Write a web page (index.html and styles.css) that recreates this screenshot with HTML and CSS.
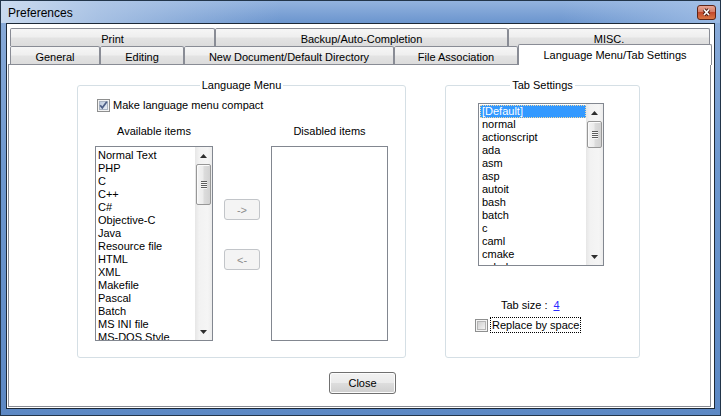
FILE: index.html
```html
<!DOCTYPE html>
<html>
<head>
<meta charset="utf-8">
<title>Preferences</title>
<link rel="stylesheet" href="styles.css">
</head>
<body>
<div class="window">
  <div class="titlebar">
    <span class="title">Preferences</span>
    <span class="close-x">
      <svg width="19" height="15" viewBox="0 0 19 15">
        <defs>
          <linearGradient id="xg" x1="0" y1="0" x2="0" y2="1">
            <stop offset="0" stop-color="#e9a999"/>
            <stop offset="0.45" stop-color="#d57d66"/>
            <stop offset="0.5" stop-color="#c2492d"/>
            <stop offset="1" stop-color="#dc7a45"/>
          </linearGradient>
        </defs>
        <rect x="0.5" y="0.5" width="18" height="14" rx="2.5" fill="url(#xg)" stroke="#5e2518"/>
        <path d="M7 4.5 L12 10 M12 4.5 L7 10" stroke="#4a1c12" stroke-width="3.4"/>
        <path d="M7 4.5 L12 10 M12 4.5 L7 10" stroke="#ffffff" stroke-width="1.7"/>
      </svg>
    </span>
  </div>
  <div class="client">
    <div class="tabctl">
      <div class="tabrow">
        <div class="tab w-print">Print</div>
        <div class="tab w-backup">Backup/Auto-Completion</div>
        <div class="tab w-misc">MISC.</div>
      </div>
      <div class="tabrow">
        <div class="tab w-general">General</div>
        <div class="tab w-editing">Editing</div>
        <div class="tab w-newdoc">New Document/Default Directory</div>
        <div class="tab w-fileassoc">File Association</div>
        <div class="tab selected w-lang">Language Menu/Tab Settings</div>
      </div>
      <div class="panel">
        <div class="groups">
          <fieldset class="group lang-group">
            <legend>Language Menu</legend>
            <label class="check-row compact">
              <span class="checkbox">
                <svg width="13" height="13" viewBox="0 0 13 13">
                  <defs>
                    <linearGradient id="cbg" x1="0" y1="0" x2="1" y2="1">
                      <stop offset="0" stop-color="#b9c7db"/>
                      <stop offset="1" stop-color="#eef2f8"/>
                    </linearGradient>
                  </defs>
                  <rect x="0.5" y="0.5" width="12" height="12" fill="#f3f3f3" stroke="#8e8f8f"/>
                  <rect x="2.5" y="2.5" width="8" height="8" fill="url(#cbg)" stroke="#aab4c3"/>
                  <path d="M3.2 6.2 L5.3 8.8 L9.8 2.8" fill="none" stroke="#4d5f86" stroke-width="1.7"/>
                </svg>
              </span>
              <span>Make language menu compact</span>
            </label>
            <div class="lang-cols">
              <div class="col">
                <div class="col-label">Available items</div>
                <div class="listbox avail">
                  <ul class="items">
                    <li>Normal Text</li>
                    <li>PHP</li>
                    <li>C</li>
                    <li>C++</li>
                    <li>C#</li>
                    <li>Objective-C</li>
                    <li>Java</li>
                    <li>Resource file</li>
                    <li>HTML</li>
                    <li>XML</li>
                    <li>Makefile</li>
                    <li>Pascal</li>
                    <li>Batch</li>
                    <li>MS INI file</li>
                    <li>MS-DOS Style</li>
                    <li>ASP</li>
                  </ul>
                  <div class="vscroll">
                    <div class="sb-arrow"><svg width="7" height="4" viewBox="0 0 7 4"><polygon points="0,4 7,4 3.5,0" fill="#2e2e2e"/></svg></div>
                    <div class="sb-track"><div class="sb-thumb thumb-avail"><span class="grip"></span></div></div>
                    <div class="sb-arrow"><svg width="7" height="4" viewBox="0 0 7 4"><polygon points="0,0 7,0 3.5,4" fill="#2e2e2e"/></svg></div>
                  </div>
                </div>
              </div>
              <div class="move-btns">
                <button class="btn-small" disabled>-&gt;</button>
                <button class="btn-small" disabled>&lt;-</button>
              </div>
              <div class="col">
                <div class="col-label">Disabled items</div>
                <div class="listbox disabled-list"></div>
              </div>
            </div>
          </fieldset>
          <fieldset class="group tab-group">
            <legend>Tab Settings</legend>
            <div class="listbox tablist">
              <ul class="items">
                <li class="sel">[Default]</li>
                <li>normal</li>
                <li>actionscript</li>
                <li>ada</li>
                <li>asm</li>
                <li>asp</li>
                <li>autoit</li>
                <li>bash</li>
                <li>batch</li>
                <li>c</li>
                <li>caml</li>
                <li>cmake</li>
                <li>cobol</li>
              </ul>
              <div class="vscroll">
                <div class="sb-arrow"><svg width="7" height="4" viewBox="0 0 7 4"><polygon points="0,4 7,4 3.5,0" fill="#2e2e2e"/></svg></div>
                <div class="sb-track"><div class="sb-thumb thumb-tab"><span class="grip"></span></div></div>
                <div class="sb-arrow"><svg width="7" height="4" viewBox="0 0 7 4"><polygon points="0,0 7,0 3.5,4" fill="#2e2e2e"/></svg></div>
              </div>
            </div>
            <div class="tabsize">Tab size :<a class="link">4</a></div>
            <label class="check-row replace">
              <span class="checkbox">
                <svg width="13" height="13" viewBox="0 0 13 13">
                  <defs>
                    <linearGradient id="cbu" x1="0" y1="0" x2="1" y2="1">
                      <stop offset="0" stop-color="#cdcdcd"/>
                      <stop offset="1" stop-color="#f6f6f6"/>
                    </linearGradient>
                  </defs>
                  <rect x="0.5" y="0.5" width="12" height="12" fill="#f4f4f4" stroke="#8e8f8f"/>
                  <rect x="2.5" y="2.5" width="8" height="8" fill="url(#cbu)" stroke="#b5b5b5"/>
                </svg>
              </span>
              <span class="focus">Replace by space</span>
            </label>
          </fieldset>
        </div>
        <div class="footer">
          <button class="btn-close">Close</button>
        </div>
      </div>
    </div>
  </div>
</div>
</body>
</html>
```
FILE: styles.css
```css
* {
  box-sizing: border-box;
}

html, body {
  margin: 0;
  padding: 0;
}

body {
  width: 721px;
  height: 416px;
  overflow: hidden;
  background: #1f2f40;
  font-family: "Liberation Sans", Arial, sans-serif;
  font-size: 11px;
  color: #000;
}

.window {
  width: 721px;
  height: 416px;
  border: 1px solid #22354a;
  background: linear-gradient(to bottom, #8cadda 0%, #6e98cf 40%, #5c88c4 100%);
  display: flex;
  flex-direction: column;
}

/* ---------- Title bar ---------- */
.titlebar {
  height: 22px;
  flex: none;
  display: flex;
  align-items: flex-start;
  justify-content: space-between;
  padding: 0 4px 0 7px;
  background:
    linear-gradient(to right, rgba(206,221,240,0.95) 0px, rgba(184,205,233,0.75) 100px, rgba(120,160,215,0) 280px, rgba(120,160,215,0) 560px, rgba(168,196,233,0.75) 719px),
    linear-gradient(to bottom, #93b3df 0%, #6b95ce 100%);
}

.title {
  font-size: 12px;
  line-height: 22px;
  padding-top: 1px;
  color: #000;
}

.close-x {
  display: block;
  margin-top: 4px;
  width: 19px;
  height: 15px;
}

.close-x svg {
  display: block;
}

/* ---------- Client ---------- */
.client {
  flex: 1;
  margin: 0 5px 6px;
  border: 1px solid #1c2836;
  background: #fff;
  display: flex;
  flex-direction: column;
}

.tabctl {
  flex: 1;
  margin: 4px 3px 1px 1px;
  display: flex;
  flex-direction: column;
}

.tabrow {
  height: 18px;
  flex: none;
  display: flex;
  padding-left: 2px;
}

.tab {
  height: 18px;
  border: 1px solid #898c95;
  border-bottom: none;
  border-radius: 2px 2px 0 0;
  background: linear-gradient(to bottom, #f6f6f6 0%, #efefef 45%, #e3e3e3 55%, #dcdcdc 100%);
  text-align: center;
  line-height: 16px;
  padding-top: 2px;
  white-space: nowrap;
  flex: none;
}

.w-print { width: 205px; }
.w-backup { width: 293px; }
.w-misc { width: 202px; }
.w-general { width: 90px; }
.w-editing { width: 84px; }
.w-newdoc { width: 210px; }
.w-fileassoc { width: 124px; }
.w-lang { width: 194px; }

.tab.selected {
  position: relative;
  z-index: 1;
  margin-top: -2px;
  height: 21px;
  background: #fff;
  line-height: 16px;
  padding-top: 2px;
}

.panel {
  flex: 1;
  border: 1px solid #898c95;
  background: #fff;
  display: flex;
  flex-direction: column;
}

/* ---------- Groups ---------- */
.groups {
  display: flex;
  margin-top: 14px;
  padding-left: 68px;
  gap: 39px;
}

.group {
  margin: 0;
  padding: 0;
  min-width: 0;
  height: 279px;
  border: 1px solid #d5dfe5;
  border-radius: 3px;
}

.group legend {
  margin: 0 auto;
  padding: 0 2px;
  line-height: 13px;
  font-size: 11px;
}

.lang-group { width: 329px; }
.tab-group { width: 195px; }

.check-row {
  display: flex;
  align-items: center;
  line-height: 13px;
}

.checkbox {
  width: 13px;
  height: 13px;
  flex: none;
}

.checkbox svg {
  display: block;
}

.compact {
  margin-top: 7px;
  padding-left: 19px;
  gap: 3px;
}

.lang-cols {
  display: flex;
  margin-top: 13px;
  padding-left: 17px;
  gap: 11px;
}

.col-label {
  height: 13px;
  line-height: 13px;
  text-align: center;
  margin-bottom: 8px;
  white-space: nowrap;
}

.listbox {
  border: 1px solid #828790;
  background: #fff;
  display: flex;
  overflow: hidden;
}

.avail { width: 118px; height: 195px; }
.disabled-list { width: 117px; height: 195px; }

.items {
  list-style: none;
  margin: 0;
  padding: 1px 0 0 1px;
  flex: 1;
  min-width: 0;
  overflow: hidden;
}

.items li {
  height: 13px;
  line-height: 13px;
  padding-left: 2px;
  white-space: nowrap;
}

.avail .items {
  padding-top: 2px;
  padding-left: 0;
}

.items li.sel {
  background: #3399ff;
  color: #fff;
  outline: 1px dotted #f3d9a6;
  outline-offset: -1px;
}

/* ---------- Scrollbar ---------- */
.vscroll {
  width: 17px;
  flex: none;
  display: flex;
  flex-direction: column;
  background: linear-gradient(to right, #e6e6e6 0%, #f2f2f2 25%, #f5f5f5 75%, #ececec 100%);
}

.sb-arrow {
  height: 17px;
  flex: none;
  display: flex;
  align-items: center;
  justify-content: center;
}

.sb-arrow svg {
  display: block;
}

.sb-track {
  flex: 1;
  display: flex;
  flex-direction: column;
  padding: 0 1px;
}

.sb-thumb {
  border: 1px solid #979797;
  border-radius: 2px;
  background: linear-gradient(to right, #f4f4f4 0%, #ececec 45%, #dcdcdc 55%, #d2d2d2 100%);
  box-shadow: inset 1px 1px 0 #fbfbfb;
  display: flex;
  align-items: center;
  justify-content: center;
}

.thumb-avail { height: 41px; }
.thumb-tab { height: 27px; }

.grip {
  width: 6px;
  height: 8px;
  background: repeating-linear-gradient(to bottom, #5c5c5c 0 1px, #f7f7f7 1px 2px);
}

/* ---------- Buttons ---------- */
.move-btns {
  width: 36px;
  padding-top: 74px;
  display: flex;
  flex-direction: column;
  gap: 29px;
}

.btn-small {
  width: 36px;
  height: 21px;
  margin: 0;
  padding: 0;
  border: 1px solid #c2c5c9;
  border-radius: 3px;
  background: #f4f4f4;
  color: #8d8d8d;
  font-family: "Liberation Sans", Arial, sans-serif;
  font-size: 11px;
}

/* ---------- Tab settings ---------- */
.tablist {
  width: 126px;
  height: 163px;
  margin: 11px 0 0 32px;
}

.tabsize {
  margin-top: 33px;
  padding-left: 55px;
  line-height: 13px;
  white-space: nowrap;
}

.link {
  color: #2b2bff;
  text-decoration: underline;
  margin-left: 6px;
}

.replace {
  margin-top: 5px;
  padding-left: 29px;
  gap: 2px;
}

.focus {
  border: 1px dotted #000;
  padding: 0 1px;
  line-height: 14px;
}

/* ---------- Footer ---------- */
.footer {
  margin-top: 14px;
  padding-left: 320px;
}

.btn-close {
  width: 67px;
  height: 22px;
  margin: 0;
  padding: 0;
  border: 1px solid #707070;
  border-radius: 3px;
  background: linear-gradient(to bottom, #f2f2f2 0%, #ebebeb 48%, #dddddd 52%, #cfcfcf 100%);
  box-shadow: inset 0 0 0 1px #fcfcfc;
  color: #000;
  font-family: "Liberation Sans", Arial, sans-serif;
  font-size: 11px;
}
```
